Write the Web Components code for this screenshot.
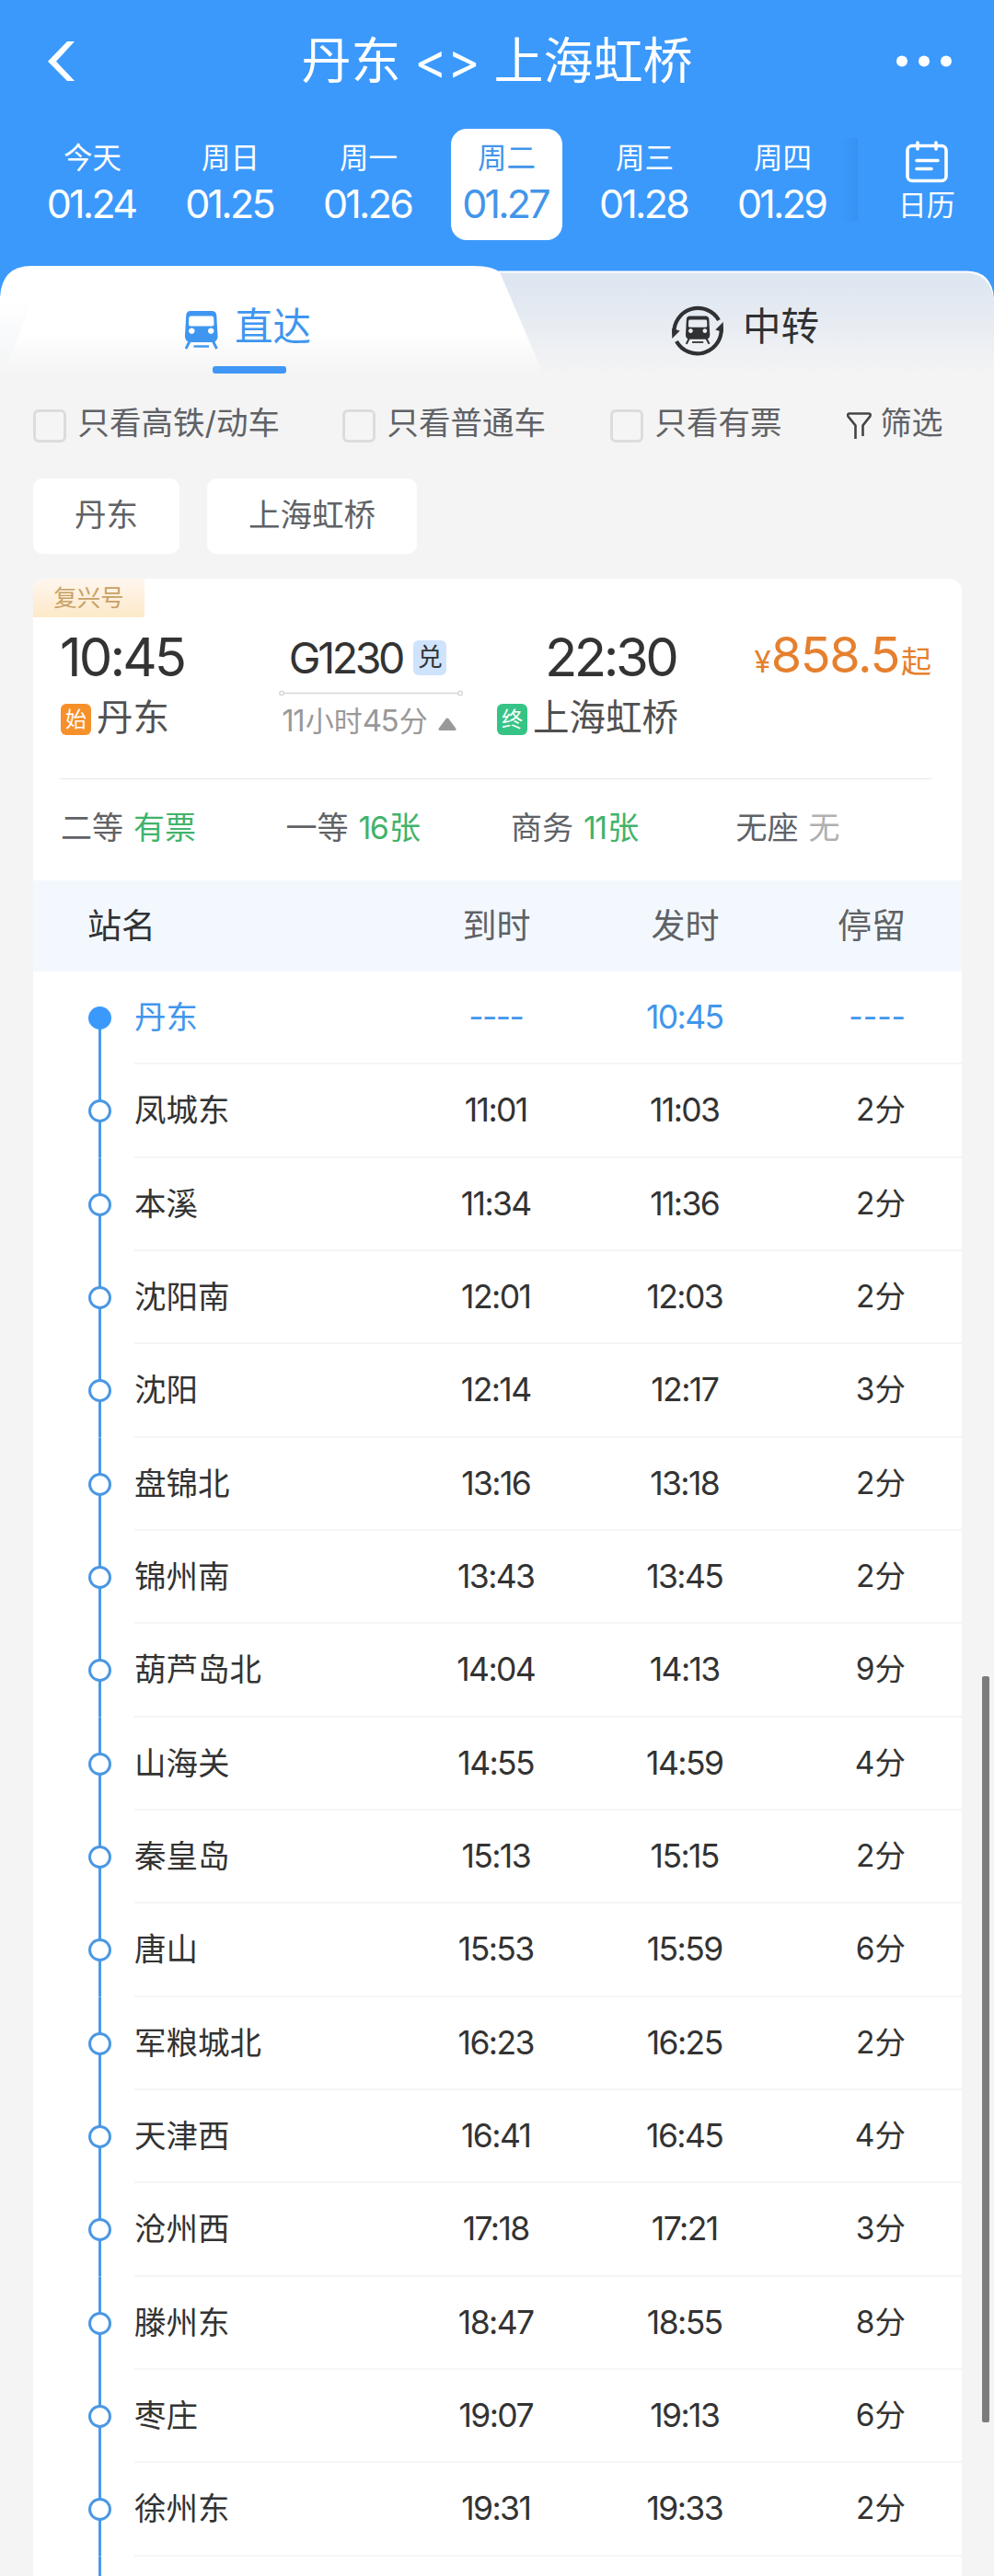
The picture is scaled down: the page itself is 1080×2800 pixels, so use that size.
<!DOCTYPE html>
<html lang="zh-CN">
<head>
<meta charset="utf-8">
<title>丹东 - 上海虹桥</title>
<style>
    html, body { margin: 0; padding: 0; }
    body {
        width: 1080px;
        height: 2800px;
        overflow: hidden;
        background: #f4f4f4;
        color: #333;
        font-family: Inter, "Noto Sans CJK SC", sans-serif;
    }
</style>
</head>
<body>
<ticket-page></ticket-page>

<script>
const TRAIN_BODY = `
    <path fill-rule="evenodd" d="M6 0h23q5 0 5.300 5l1.200 22q.2 7-6 7H6q-6.200 0-6-7l1.200-22Q1.500 0 6 0zM6.500 5.500q-2 0-2.200 2L4 14.500q0 2 2 2h23.500q2 0 2-2l-.3-7q-.2-2-2.200-2zM7.300 18.500a3.200 3.200 0 1 0 .01 0zM28.200 18.500a3.200 3.200 0 1 0 .01 0z"/>
    <path d="M5 33l-4 8M30.500 33l4 8" fill="none" stroke="currentColor" stroke-width="2.800"/>
    <path d="M9.500 38.500h16.500" fill="none" stroke="currentColor" stroke-width="2.400"/>`;

const STOPS = [
    ['丹东', '----', '10:45', '----'],
    ['凤城东', '11:01', '11:03', '2分'],
    ['本溪', '11:34', '11:36', '2分'],
    ['沈阳南', '12:01', '12:03', '2分'],
    ['沈阳', '12:14', '12:17', '3分'],
    ['盘锦北', '13:16', '13:18', '2分'],
    ['锦州南', '13:43', '13:45', '2分'],
    ['葫芦岛北', '14:04', '14:13', '9分'],
    ['山海关', '14:55', '14:59', '4分'],
    ['秦皇岛', '15:13', '15:15', '2分'],
    ['唐山', '15:53', '15:59', '6分'],
    ['军粮城北', '16:23', '16:25', '2分'],
    ['天津西', '16:41', '16:45', '4分'],
    ['沧州西', '17:18', '17:21', '3分'],
    ['滕州东', '18:47', '18:55', '8分'],
    ['枣庄', '19:07', '19:13', '6分'],
    ['徐州东', '19:31', '19:33', '2分'],
];

class BaseElement extends HTMLElement {
    constructor() {
        super();
        this.attachShadow({ mode: 'open' });
    }

    connectedCallback() {
        this.shadowRoot.innerHTML = this.render();
    }

    attr(name) {
        return this.getAttribute(name) || '';
    }
}

/* Tight-set digits. Sits inline next to Chinese text. */
class NumText extends BaseElement {
    render() {
        return `
            <style>:host { display: inline-block; letter-spacing: -0.045em; margin-right: 0.045em; }</style>
            <slot></slot>`;
    }
}

class NavBar extends BaseElement {
    render() {
        return `
            <style>
                :host {
                    display: flex;
                    align-items: center;
                    justify-content: space-between;
                    box-sizing: border-box;
                    height: 133px;
                    padding: 0 50px 0 52px;
                    color: #fff;
                }
                h1 { margin: 0 6px 0 0; display: flex; font-size: 54px; font-weight: 400; line-height: 70px; }
                .arrows { width: 101px; text-align: center; font-size: 54px; font-feature-settings: "calt" 0, "liga" 0; }
                .side { flex: 0 0 60px; display: flex; }
                .side.right { justify-content: flex-end; margin-right: -4px; }
            </style>
            <div class="side">
                <svg width="30" height="43" viewBox="0 0 30 43"><path d="M21 0h8L9 21.700l20 21.300h-8L0 21.700z" fill="currentColor"/></svg>
            </div>
            <h1><span>${this.attr('from')}</span><span class="arrows">&lt;&gt;</span><span>${this.attr('to')}</span></h1>
            <div class="side right">
                <svg width="60" height="13" viewBox="0 0 60 13" fill="currentColor"><circle cx="6" cy="6.500" r="6"/><circle cx="30" cy="6.500" r="6"/><circle cx="54" cy="6.500" r="6"/></svg>
            </div>`;
    }
}

class DateItem extends BaseElement {
    render() {
        return `
            <style>
                :host {
                    display: flex;
                    flex-direction: column;
                    align-items: center;
                    box-sizing: border-box;
                    width: 121px;
                    height: 121px;
                    padding-top: 15px;
                    border-radius: 17px;
                    color: #fff;
                }
                :host([selected]) { background: #fff; color: #4295ea; }
                .day { font-size: 31.500px; line-height: 34px; padding-left: 1px; }
                .date { font-size: 43px; line-height: 44px; margin-top: 10px; letter-spacing: -0.064em; }
            </style>
            <div class="day"><slot></slot></div>
            <num-text class="date">${this.attr('date')}</num-text>`;
    }
}

class DateStrip extends BaseElement {
    render() {
        return `
            <style>
                :host { display: flex; box-sizing: border-box; height: 156px; padding: 7px 0 0 39.500px; color: #fff; }
                .dates { display: flex; gap: 29px; }
                .edge { width: 18px; height: 90px; margin: 10px 0 0 3px; background: linear-gradient(90deg, rgba(30,100,190,0), rgba(30,100,190,.15)); }
                .calendar { flex: 1; display: flex; flex-direction: column; align-items: center; padding: 13px 0 0 2px; font-size: 31px; line-height: 34px; }
                .calendar svg { margin-bottom: 7px; }
            </style>
            <div class="dates"><slot></slot></div>
            <div class="edge"></div>
            <div class="calendar">
                <svg width="46" height="46" viewBox="0 0 46 46" fill="none" stroke="currentColor" stroke-width="3.600" stroke-linecap="round">
                    <rect x="2" y="5.500" width="42" height="38" rx="5"/>
                    <path d="M13 2v7M33 2v7M12 21.500h23M12 30.500h16"/>
                </svg>
                <div>日历</div>
            </div>`;
    }
}

class TabBar extends BaseElement {
    render() {
        return `
            <style>
                :host { display: grid; height: 119px; background: #3b99fc; }
                :host > * { grid-area: 1 / 1; }
                .tabs { display: grid; grid-template-columns: 541px 1fr; font-size: 41.500px; line-height: 50px; z-index: 1; }
                .tab { display: flex; align-items: flex-start; }
                .direct { color: #3f96f0; padding-left: 201px; }
                .direct .text { display: flex; flex-direction: column; }
                .label { margin-top: 41px; }
                .direct svg { margin: 49px 18px 0 0; }
                .bar { width: 80px; height: 8.500px; border-radius: 3px; background: #3f96f5; margin: 17.500px 0 0 -24px; }
                .transfer { color: #303133; padding-left: 188px; }
                .transfer svg { margin: 41px 20px 0 0; }
            </style>
            <svg width="1080" height="119" viewBox="0 0 1080 119">
                <defs>
                    <linearGradient id="on" x1="0" y1="0" x2="0" y2="119" gradientUnits="userSpaceOnUse"><stop offset=".6" stop-color="#fff"/><stop offset="1" stop-color="#f4f4f4"/></linearGradient>
                    <linearGradient id="off" x1="0" y1="0" x2="0" y2="119" gradientUnits="userSpaceOnUse"><stop offset=".15" stop-color="#dee6f1"/><stop offset="1" stop-color="#f4f4f4"/></linearGradient>
                    <linearGradient id="wedge" x1="0" y1="40" x2="0" y2="119" gradientUnits="userSpaceOnUse"><stop offset="0" stop-color="#f5f7f9" stop-opacity="0"/><stop offset=".6" stop-color="#f6f8f9"/><stop offset="1" stop-color="#f4f4f4"/></linearGradient>
                </defs>
                <path d="M500 5.500H1050Q1078 5.500 1080 36V119H400z" fill="#fff"/>
                <path d="M500 7.500H1049Q1076 7.500 1080 38V119H400z" fill="url(#off)"/>
                <path d="M0 119V34Q2 0 34 0H514Q537 0 543.500 8L591 119z" fill="url(#on)"/>
                <path d="M0 40H34L3 119H0z" fill="url(#wedge)"/>
            </svg>
            <div class="tabs">
                <div class="tab direct">
                    <svg width="36" height="42" viewBox="0 0 36 42" fill="currentColor">${TRAIN_BODY}</svg>
                    <div class="text"><div class="label">直达</div><div class="bar"></div></div>
                </div>
                <div class="tab transfer">
                    <svg width="58" height="58" viewBox="0 0 58 58" fill="currentColor">
                        <g fill="none" stroke="currentColor" stroke-width="4.200">
                            <path d="M3.500 33A26 26 0 0 1 52 18"/>
                            <path d="M54.500 25A26 26 0 0 1 6 41"/>
                        </g>
                        <path d="M1.200 27v11l8.500-8.500zM56.800 31V20l-8.500 8.500z"/>
                        <g transform="translate(16 13.500) scale(.74)">${TRAIN_BODY}</g>
                    </svg>
                    <div class="label">中转</div>
                </div>
            </div>`;
    }
}

class CheckFilter extends BaseElement {
    render() {
        return `
            <style>
                :host { display: flex; gap: 12.500px; font-size: 34.500px; line-height: 30px; color: #606266; white-space: nowrap; }
                .box { box-sizing: border-box; width: 36px; height: 36px; border: 3px solid #dcdcdc; border-radius: 6px; background: #f5f5f5; }
            </style>
            <span class="box"></span><span><slot></slot></span>`;
    }
}

class FilterBar extends BaseElement {
    render() {
        return `
            <style>
                :host { display: grid; grid-template-columns: 336px 291px 257px auto; box-sizing: border-box; height: 112px; padding: 37px 0 0 36px; }
                .more { display: flex; gap: 9.500px; font-size: 34px; line-height: 30px; color: #606266; }
                .more svg { margin-top: 2.500px; color: #444; }
            </style>
            <check-filter>只看高铁/动车</check-filter>
            <check-filter>只看普通车</check-filter>
            <check-filter>只看有票</check-filter>
            <div class="more">
                <svg width="27" height="30" viewBox="0 0 27 30" fill="none" stroke="currentColor" stroke-width="2.600"><path d="M9.500 29V14.500L1.500 4.500Q.5 1.500 3 1.500H24Q26.500 1.500 25.300 4.500L17.500 14.500V26"/></svg>
                <span>筛选</span>
            </div>`;
    }
}

class StationChip extends BaseElement {
    render() {
        return `
            <style>
                :host { padding: 0 45px 3px; height: 79px; line-height: 79px; border-radius: 10px; background: #fff; font-size: 34.500px; color: #606266; }
            </style>
            <slot></slot>`;
    }
}

class SeatInfo extends BaseElement {
    render() {
        return `
            <style>
                :host { display: flex; gap: 11px; font-size: 34px; line-height: 105px; color: #606266; white-space: nowrap; }
                .left { color: #41b36b; }
                :host([empty]) .left { color: #b0b0b0; }
            </style>
            <span>${this.attr('name')}</span><span class="left"><slot></slot></span>`;
    }
}

class TrainSummary extends BaseElement {
    render() {
        return `
            <style>
                :host { display: block; }
                .tag {
                    width: 121px; height: 42px; line-height: 41px; text-align: center;
                    font-size: 25.500px; color: #c8a063;
                    border-radius: 12px 0 3px 0;
                    background: linear-gradient(#fff6ee, #fde9c9);
                }
                .main {
                    display: grid;
                    grid-template-columns: 238px 199px 235px 1fr;
                    height: 175px;
                    margin: 0 33px 0 29px;
                    border-bottom: 1.500px solid #e8e8e8;
                }
                .time { font-size: 58px; line-height: 60px; padding-top: 13px; letter-spacing: -0.05em; }
                .end { display: flex; flex-direction: column; align-items: flex-end; }
                .end .time { letter-spacing: -0.06em; }
                .station { display: flex; align-items: center; gap: 6px; height: 40px; margin-top: 17px; padding-left: 1px; font-size: 39.500px; line-height: 36px; color: #505050; }
                .station span { margin-top: -2px; }
                .mark { width: 33px; height: 34px; line-height: 34px; border-radius: 6px; font-size: 23px; text-align: center; color: #fff; background: #f6902a; margin-top: 1px; }
                .mark.last { background: #36c486; }
                .train { display: flex; flex-direction: column; align-items: center; }
                .no { display: flex; align-items: center; gap: 10px; height: 48px; margin-top: 20px; font-size: 46.500px; padding-right: 6px; }
                .no num-text { letter-spacing: -0.072em; }
                .swap { width: 36px; height: 38px; line-height: 37px; border-radius: 6px; background: #cfe3fd; font-size: 27px; text-align: center; }
                .track { margin-top: 11px; }
                .took { display: flex; align-items: center; gap: 11px; font-size: 31px; line-height: 36px; margin-top: 8px; color: #999; padding-right: 3px; }
                .took num-text { font-size: 33px; }
                .took svg { margin-top: 6px; }
                .price { text-align: right; color: #e5802f; font-size: 54px; line-height: 60px; padding-top: 11px; white-space: nowrap; }
                .price num-text { letter-spacing: -0.025em; margin-right: 2px; }
                .price small { font-size: 33px; }
                .seats { display: grid; grid-template-columns: repeat(4, 244.500px); height: 109px; padding-left: 30px; }
            </style>
            <div class="tag">复兴号</div>
            <div class="main">
                <div>
                    <num-text class="time">10:45</num-text>
                    <div class="station"><div class="mark">始</div><span>丹东</span></div>
                </div>
                <div class="train">
                    <div class="no"><num-text>G1230</num-text><div class="swap">兑</div></div>
                    <svg class="track" width="200" height="7" viewBox="0 0 200 7" fill="none" stroke="#d8d8d8" stroke-width="1.600"><path d="M5.500 3.500h189"/><circle cx="3" cy="3.500" r="2.200" fill="#fff"/><circle cx="197" cy="3.500" r="2.200" fill="#fff"/></svg>
                    <div class="took"><span><num-text>11</num-text>小时<num-text>45</num-text>分</span><svg width="20" height="14" viewBox="0 0 20 14"><path d="M8.700 1Q10 0 11.300 1L19.500 12Q20 14 18 14H2Q0 14 .5 12z" fill="#999"/></svg></div>
                </div>
                <div class="end">
                    <num-text class="time">22:30</num-text>
                    <div class="station"><div class="mark last">终</div><span>上海虹桥</span></div>
                </div>
                <div class="price"><small>¥</small><num-text>858.5</num-text><small>起</small></div>
            </div>
            <div class="seats">
                <seat-info name="二等">有票</seat-info>
                <seat-info name="一等"><num-text>16</num-text>张</seat-info>
                <seat-info name="商务"><num-text>11</num-text>张</seat-info>
                <seat-info name="无座" empty>无</seat-info>
            </div>`;
    }
}

class StopRow extends BaseElement {
    render() {
        const stay = this.attr('stay').replace(/^(\d+)/, '<num-text>$1</num-text>');
        return `
            <style>
                :host { display: flex; height: 101.330px; font-size: 34.500px; line-height: 99px; color: #333; }
                :host([first]) { color: #4196ec; }
                .rail {
                    display: flex; align-items: center; justify-content: center;
                    width: 25px; margin: 0 25px 0 60px;
                    background: linear-gradient(#4a9ae8, #4a9ae8) center / 3px 100% no-repeat;
                }
                .dot { box-sizing: border-box; width: 25px; height: 25px; border: 3px solid #4b97e3; border-radius: 50%; background: #fff; }
                :host([first]) .rail { background-position: bottom; background-size: 3px 50%; }
                :host([first]) .dot { background: #3b99fc; border-color: #3b99fc; }
                .cells { flex: 1; display: grid; grid-template-columns: 1fr 205px 205px 137px; box-sizing: border-box; padding-right: 61px; border-bottom: 2px solid #f5f5f5; }
                .time { text-align: center; font-size: 35.500px; }
                .stay { text-align: right; font-size: 33.500px; }
            </style>
            <div class="rail"><div class="dot"></div></div>
            <div class="cells">
                <div>${this.attr('name')}</div>
                <div class="time"><num-text>${this.attr('arrive')}</num-text></div>
                <div class="time"><num-text>${this.attr('depart')}</num-text></div>
                <div class="stay">${stay}</div>
            </div>`;
    }
}

class StopTable extends BaseElement {
    render() {
        const rows = STOPS.map(([name, arrive, depart, stay], i) =>
            `<stop-row name="${name}" arrive="${arrive}" depart="${depart}" stay="${stay}"${i ? '' : ' first'}></stop-row>`);
        return `
            <style>
                :host { display: block; }
                .head {
                    display: grid;
                    grid-template-columns: 1fr 205px 205px 137px;
                    height: 99px; line-height: 99px;
                    margin-top: 1px;
                    padding: 0 61px 0 59px;
                    background: #f3f8fe;
                    font-size: 37px;
                    color: #606266;
                    text-align: center;
                }
                .head :first-child { text-align: left; color: #303133; }
                .head :last-child { text-align: right; }
            </style>
            <div class="head"><div>站名</div><div>到时</div><div>发时</div><div>停留</div></div>
            ${rows.join('')}
            <stop-row></stop-row>`;
    }
}

class TicketPage extends BaseElement {
    render() {
        return `
            <style>
                :host { display: block; position: relative; height: 2800px; overflow: hidden; }
                header { background: #3b99fc; }
                .chips { display: flex; gap: 30px; padding-left: 36px; height: 109px; }
                .card { margin: 0 35px 0 36px; background: #fff; border-radius: 14px 14px 0 0; }
                .scrollbar { position: absolute; right: 5px; top: 1822px; width: 8px; height: 811px; border-radius: 2px; background: #7c7c7c; }
            </style>
            <header>
                <nav-bar from="丹东" to="上海虹桥"></nav-bar>
                <date-strip>
                    <date-item date="01.24">今天</date-item>
                    <date-item date="01.25">周日</date-item>
                    <date-item date="01.26">周一</date-item>
                    <date-item date="01.27" selected>周二</date-item>
                    <date-item date="01.28">周三</date-item>
                    <date-item date="01.29">周四</date-item>
                </date-strip>
            </header>
            <tab-bar></tab-bar>
            <filter-bar></filter-bar>
            <div class="chips"><station-chip>丹东</station-chip><station-chip>上海虹桥</station-chip></div>
            <div class="card">
                <train-summary></train-summary>
                <stop-table></stop-table>
            </div>
            <div class="scrollbar"></div>`;
    }
}

customElements.define('num-text', NumText);
customElements.define('nav-bar', NavBar);
customElements.define('date-item', DateItem);
customElements.define('date-strip', DateStrip);
customElements.define('tab-bar', TabBar);
customElements.define('check-filter', CheckFilter);
customElements.define('filter-bar', FilterBar);
customElements.define('station-chip', StationChip);
customElements.define('seat-info', SeatInfo);
customElements.define('train-summary', TrainSummary);
customElements.define('stop-row', StopRow);
customElements.define('stop-table', StopTable);
customElements.define('ticket-page', TicketPage);
</script>
</body>
</html>
